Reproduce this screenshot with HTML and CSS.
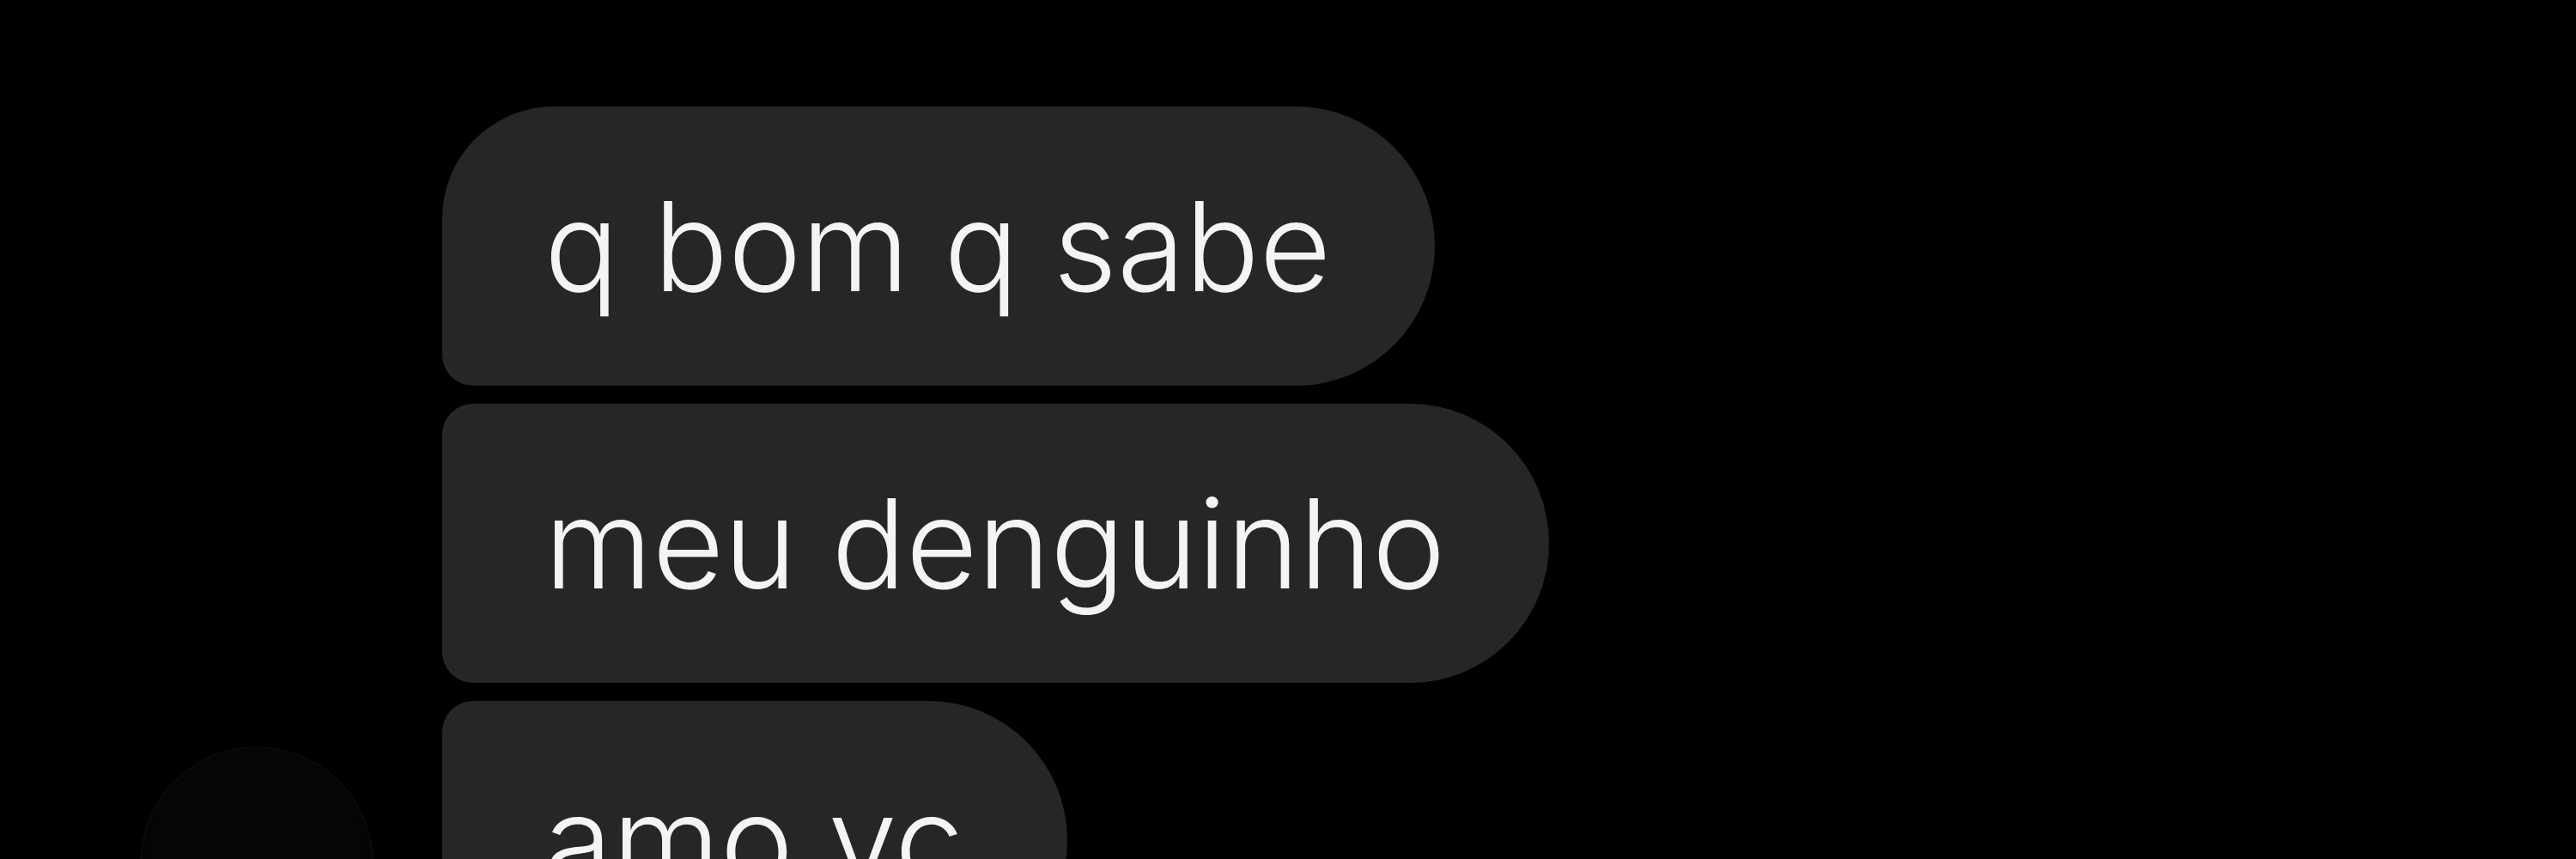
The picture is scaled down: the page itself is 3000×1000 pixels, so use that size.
FILE: index.html
```html
<!DOCTYPE html>
<html lang="pt">
<head>
  <meta charset="UTF-8">
  <title>Direct</title>
  <link rel="stylesheet" href="styles.css">
</head>
<body>
<div id="thread">
  <div class="group">
    <div class="avatar"></div>
    <div class="bubbles">
      <div class="bubble first">q bom q sabe</div>
      <div class="bubble">meu denguinho</div>
      <div class="bubble last">amo vc</div>
    </div>
  </div>
</div>
</body>
</html>
```

FILE: styles.css
```css
body {
  margin: 0;
  background: #000;
  font-family: Inter, "Noto Sans", sans-serif;
}

#thread {
  padding: 124px 0 0 163px;
}

.group {
  display: flex;
  gap: 80px;
}

.avatar {
  align-self: flex-end;
  flex: none;
  width: 272px;
  height: 272px;
  border-radius: 50%;
  background: radial-gradient(circle at 50% 45%, #070707 40%, #040404 70%, #020202 100%);
  box-shadow: inset 0 0 0 2px #0a0a0c;
}

.bubbles {
  display: flex;
  flex-direction: column;
  align-items: flex-start;
  gap: 21px;
}

.bubble {
  background: #262626;
  color: #f4f4f4;
  font-size: 144px;
  font-weight: 360;
  line-height: 174px;
  padding: 76px 121px 75px 119px;
  border-radius: 36px 162px 162px 36px;
  white-space: nowrap;
}

.bubble.first {
  border-top-left-radius: 130px;
}

.bubble.last {
  border-bottom-left-radius: 130px;
}
```
